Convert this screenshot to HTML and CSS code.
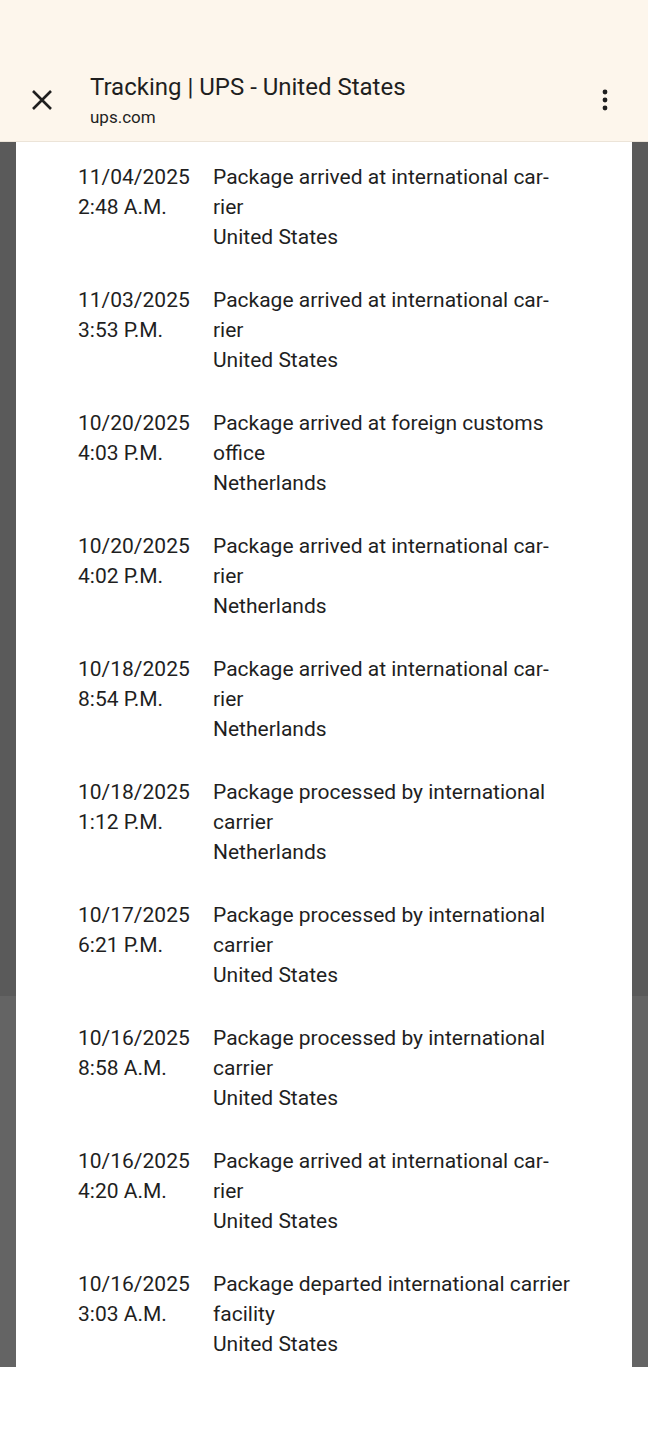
FILE: index.html
```html
<!DOCTYPE html>
<html lang="en">
  <head>
    <meta charset="utf-8">
    <title>Tracking | UPS - United States</title>
    <link rel="stylesheet" href="styles.css">
  </head>
  <body>
    <div class="topbar">
        <svg class="close" width="24" height="24" viewBox="0 0 24 24"><path d="M3 3 L21 21 M21 3 L3 21" stroke="#1f1f1f" stroke-width="2.6" fill="none"/></svg>
        <div class="titre">
            <div class="nom">Tracking | UPS - United States</div>
            <div class="url">ups.com</div>
        </div>
        <svg class="menu" width="24" height="24" viewBox="0 0 24 24"><circle cx="12" cy="4" r="2.4" fill="#1f1f1f"/><circle cx="12" cy="12" r="2.4" fill="#1f1f1f"/><circle cx="12" cy="20" r="2.4" fill="#1f1f1f"/></svg>
    </div>

    <div class="fond">
        <div class="feuille">
            <div class="ligne">
                <div class="quand">11/04/2025<br>2:48 A.M.</div>
                <div class="quoi">Package arrived at international car&shy;rier<br>United States</div>
            </div>
            <div class="ligne">
                <div class="quand">11/03/2025<br>3:53 P.M.</div>
                <div class="quoi">Package arrived at international car&shy;rier<br>United States</div>
            </div>
            <div class="ligne">
                <div class="quand">10/20/2025<br>4:03 P.M.</div>
                <div class="quoi">Package arrived at foreign customs office<br>Netherlands</div>
            </div>
            <div class="ligne">
                <div class="quand">10/20/2025<br>4:02 P.M.</div>
                <div class="quoi">Package arrived at international car&shy;rier<br>Netherlands</div>
            </div>
            <div class="ligne">
                <div class="quand">10/18/2025<br>8:54 P.M.</div>
                <div class="quoi">Package arrived at international car&shy;rier<br>Netherlands</div>
            </div>
            <div class="ligne">
                <div class="quand">10/18/2025<br>1:12 P.M.</div>
                <div class="quoi">Package processed by international carrier<br>Netherlands</div>
            </div>
            <div class="ligne">
                <div class="quand">10/17/2025<br>6:21 P.M.</div>
                <div class="quoi">Package processed by international carrier<br>United States</div>
            </div>
            <div class="ligne">
                <div class="quand">10/16/2025<br>8:58 A.M.</div>
                <div class="quoi">Package processed by international carrier<br>United States</div>
            </div>
            <div class="ligne">
                <div class="quand">10/16/2025<br>4:20 A.M.</div>
                <div class="quoi">Package arrived at international car&shy;rier<br>United States</div>
            </div>
            <div class="ligne">
                <div class="quand">10/16/2025<br>3:03 A.M.</div>
                <div class="quoi">Package departed international carrier facility<br>United States</div>
            </div>
        </div>
    </div>
  </body>
</html>
```

FILE: styles.css
```css
body {
    margin: 0;
    font-family: Roboto, sans-serif;
    color: #1f1f1f;
    background-color: white;
}

.topbar {
    height: 142px;
    box-sizing: border-box;
    padding: 72px 0 14px 0;
    background-color: #fdf6ec;
    border-bottom: 1px solid #ece4d8;
    display: flex;
    align-items: center;
}
.close {
    margin-left: 30px;
    flex: none;
}
.titre {
    margin-left: 36px;
    flex: 1;
}
.nom {
    font-size: 24px;
    line-height: 30px;
}
.url {
    font-size: 17px;
    line-height: 22px;
    margin-top: 4px;
}
.menu {
    margin-right: 31px;
    flex: none;
}

.fond {
    height: 1225px;
    padding: 0 16px;
    background: linear-gradient(to bottom, #5a5a5a 0, #5a5a5a 854px, #646464 854px);
    overflow: hidden;
}
.feuille {
    background-color: white;
    height: 100%;
    padding: 20px 0 0 62px;
    box-sizing: border-box;
    overflow: hidden;
}
.ligne {
    display: grid;
    grid-template-columns: 135px 358px;
    font-size: 21px;
    line-height: 30px;
    margin-bottom: 33px;
}
.quoi {
    hyphens: manual;
}
```
